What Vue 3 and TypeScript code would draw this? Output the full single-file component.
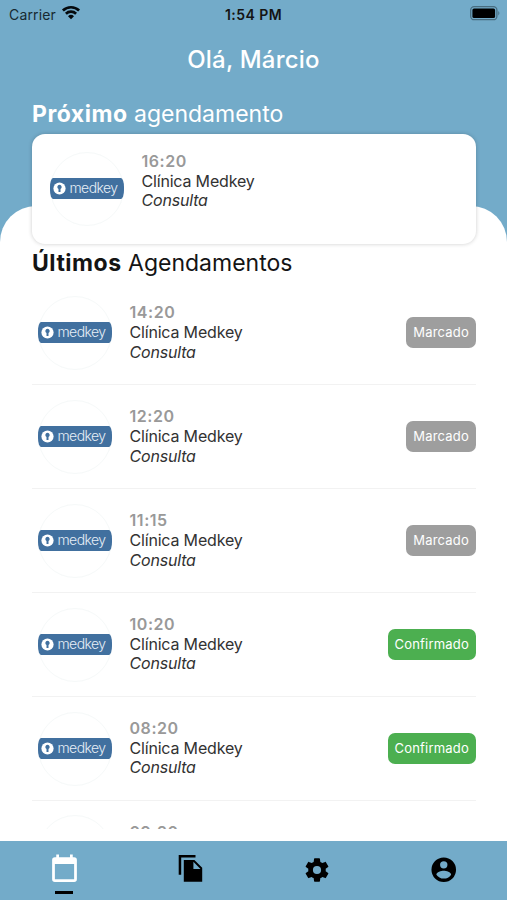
<script setup lang="ts">
import { ref } from 'vue'

interface Appointment {
  time: string
  status: 'Marcado' | 'Confirmado'
}

const appointments: Appointment[] = [
  { time: '14:20', status: 'Marcado' },
  { time: '12:20', status: 'Marcado' },
  { time: '11:15', status: 'Marcado' },
  { time: '10:20', status: 'Confirmado' },
  { time: '08:20', status: 'Confirmado' },
  { time: '09:20', status: 'Confirmado' },
]

const tabs = ['agenda', 'documents', 'settings', 'account']
const active = ref('agenda')
</script>

<template>
  <div class="screen">
    <header class="status">
      <div class="carrier">
        <span>Carrier</span>
        <svg width="20" height="15" viewBox="0 0 20 15" fill="none" stroke="#050a0d" stroke-width="2.7">
          <path d="M1.9 5.5a11.7 11.7 0 0 1 16.2 0" />
          <path d="M4.9 8.7a7.4 7.4 0 0 1 10.2 0" />
          <path d="M7 11.3a4.3 4.3 0 0 1 6 0l-3 3z" fill="#050a0d" stroke="none" />
        </svg>
      </div>
      <strong class="clock">1:54 PM</strong>
      <svg class="battery" width="31" height="15" viewBox="0 0 31 15">
        <rect x="0.7" y="0.7" width="26.2" height="13" rx="3.5" fill="none" stroke="#486d80" stroke-width="1.3" />
        <rect x="2.4" y="2.5" width="22.7" height="9.5" rx="1.6" fill="#000" />
        <path d="M28.3 5q2.2 2.2 0 4.4z" fill="#486d80" />
      </svg>
    </header>

    <h1 class="greeting">Olá, Márcio</h1>
    <h2 class="heading next"><b>Próximo</b> agendamento</h2>

    <main class="sheet">
      <section class="card">
        <div class="avatar">
          <div class="brand">
            <svg width="13" height="13" viewBox="0 0 13 13">
              <circle cx="6.5" cy="6.5" r="6.1" fill="#fff" />
              <path d="M6.5 2.8a2.3 2.3 0 0 1 1 4.3V10h-2V7.1a2.3 2.3 0 0 1 1-4.3z" fill="#41709f" />
            </svg>
            <span>medkey</span>
          </div>
        </div>
        <div class="details">
          <b>16:20</b>
          <span>Clínica Medkey</span>
          <i>Consulta</i>
        </div>
      </section>

      <h2 class="heading latest"><b>Últimos</b> Agendamentos</h2>

      <ul class="list">
        <li v-for="item in appointments" :key="item.time" class="row">
          <div class="avatar">
            <div class="brand">
              <svg width="13" height="13" viewBox="0 0 13 13">
                <circle cx="6.5" cy="6.5" r="6.1" fill="#fff" />
                <path d="M6.5 2.8a2.3 2.3 0 0 1 1 4.3V10h-2V7.1a2.3 2.3 0 0 1 1-4.3z" fill="#41709f" />
              </svg>
              <span>medkey</span>
            </div>
          </div>
          <div class="details">
            <b>{{ item.time }}</b>
            <span>Clínica Medkey</span>
            <i>Consulta</i>
          </div>
          <span class="badge" :class="{ confirmed: item.status === 'Confirmado' }">{{ item.status }}</span>
        </li>
      </ul>
    </main>

    <nav class="tabs">
      <button v-for="tab in tabs" :key="tab" class="tab" :class="{ active: active === tab }" @click="active = tab">
        <svg v-if="tab === 'agenda'" width="33" height="33" viewBox="0 0 24 24">
          <path d="M19 19H5V8h14m0-5h-1V1h-2v2H8V1H6v2H5a2 2 0 0 0-2 2v14a2 2 0 0 0 2 2h14a2 2 0 0 0 2-2V5a2 2 0 0 0-2-2z" />
        </svg>
        <svg v-else-if="tab === 'documents'" width="33" height="33" viewBox="0 0 33 33">
          <path d="M4.7 2h16.8v2.5H7.2v17.2H4.7z" />
          <path fill-rule="evenodd" d="M9.8 7h10.6l7.8 7.8v13.9H9.8zM19.4 8.8v7.1h7.1z" />
        </svg>
        <svg v-else-if="tab === 'settings'" width="28" height="28" viewBox="0 0 24 24">
          <path d="M12 15.5A3.5 3.5 0 0 1 8.5 12 3.5 3.5 0 0 1 12 8.5a3.5 3.5 0 0 1 3.5 3.5 3.5 3.5 0 0 1-3.5 3.5m7.43-2.53c.04-.32.07-.64.07-.97s-.03-.66-.07-1l2.11-1.63c.19-.15.24-.42.12-.64l-2-3.46c-.12-.22-.39-.31-.61-.22l-2.49 1c-.52-.39-1.06-.73-1.69-.98l-.37-2.65A.506.506 0 0 0 14 2h-4c-.25 0-.46.18-.5.42l-.37 2.65c-.63.25-1.17.59-1.69.98l-2.49-1c-.22-.09-.49 0-.61.22l-2 3.46c-.13.22-.07.49.12.64L4.57 11c-.04.34-.07.67-.07 1s.03.65.07.97l-2.11 1.66c-.19.15-.25.42-.12.64l2 3.46c.12.22.39.3.61.22l2.49-1.01c.52.4 1.06.74 1.69.99l.37 2.65c.04.24.25.42.5.42h4c.25 0 .46-.18.5-.42l.37-2.65c.63-.26 1.17-.59 1.69-.99l2.49 1.01c.22.08.49 0 .61-.22l2-3.46c.12-.22.07-.49-.12-.64z" />
        </svg>
        <svg v-else width="29.5" height="29.5" viewBox="0 0 24 24">
          <path d="M12 19.2c-2.5 0-4.71-1.28-6-3.2.03-2 4-3.1 6-3.1s5.97 1.1 6 3.1a7.23 7.23 0 0 1-6 3.2M12 5a3 3 0 0 1 3 3 3 3 0 0 1-3 3 3 3 0 0 1-3-3 3 3 0 0 1 3-3m0-3A10 10 0 0 0 2 12a10 10 0 0 0 10 10 10 10 0 0 0 10-10A10 10 0 0 0 12 2z" />
        </svg>
      </button>
    </nav>
  </div>
</template>

<style>
body {
  margin: 0;
}
</style>

<style scoped>
* {
  box-sizing: border-box;
}

.screen {
  width: 507px;
  height: 900px;
  overflow: hidden;
  display: flex;
  flex-direction: column;
  background: #73abc9;
  color: #141414;
  font-family: Inter, sans-serif;
}

.status {
  height: 28px;
  flex: none;
  display: grid;
  grid-template-columns: 1fr auto 1fr;
  align-items: center;
  padding: 0 6px 0 9px;
  font-size: 14px;
}

.carrier {
  display: flex;
  align-items: center;
  gap: 5px;
  color: #172931;
  letter-spacing: 0.15px;
}

.carrier svg {
  margin-top: -3px;
}

.clock {
  margin-left: -3px;
  font-size: 14px;
  font-weight: 600;
  letter-spacing: 0.45px;
}

.battery {
  justify-self: end;
  margin-top: -1px;
}

.greeting {
  flex: none;
  height: 32px;
  margin: 16px 0 0;
  line-height: 32px;
  text-align: center;
  font-size: 24px;
  font-weight: 500;
  letter-spacing: 0.2px;
  color: #fff;
}

.heading {
  flex: none;
  margin: 0;
  height: 30px;
  line-height: 30px;
  padding-left: 32px;
  font-size: 23px;
  font-weight: 400;
}

.heading b {
  font-weight: 700;
  letter-spacing: 0.5px;
}

.next {
  margin-top: 23px;
  color: #fff;
}

.sheet {
  flex: 1;
  min-height: 0;
  display: flex;
  flex-direction: column;
  margin-top: 77px;
  border-radius: 36px 36px 0 0;
  background: #fff;
}

.card {
  flex: none;
  height: 110px;
  margin: -72px 31px 0 31.5px;
  padding: 17.5px 18px;
  display: flex;
  border-radius: 13px;
  background: #fff;
  box-shadow: 0 0 4px rgba(0, 0, 0, 0.2);
}

.avatar {
  flex: none;
  width: 74px;
  height: 74px;
  display: flex;
  align-items: center;
  border: 1px solid #f6f9f9;
  border-radius: 50%;
}

.brand {
  flex: none;
  width: 74px;
  height: 21px;
  margin-left: -1px;
  padding-left: 3px;
  display: flex;
  align-items: center;
  gap: 4px;
  border-radius: 3px / 9px;
  background: #41709f;
  color: #e6eef6;
  font-size: 14px;
  font-weight: 300;
  letter-spacing: -0.6px;
  line-height: 18px;
}

.brand span {
  padding-bottom: 1px;
}

.details {
  display: flex;
  flex-direction: column;
  margin-left: 18px;
  font-size: 16px;
  line-height: 19.7px;
  letter-spacing: -0.18px;
  color: #323232;
}

.details b {
  color: #999;
  font-weight: 600;
  letter-spacing: 0.55px;
}

.card .details {
  padding-top: 0.5px;
}

.latest {
  margin-top: 4px;
}

.list {
  flex: 1;
  min-height: 0;
  margin: 3.5px 31px 12px 31.5px;
  padding: 0;
  overflow: hidden;
  list-style: none;
}

.row {
  height: 103.9px;
  display: flex;
  align-items: center;
  padding: 0 0 0 6px;
  border-bottom: 1px solid #f2f2f2;
}

.badge {
  height: 31px;
  margin-left: auto;
  padding: 0 7px;
  border-radius: 7px;
  background: #9e9e9e;
  color: #fff;
  font-size: 13px;
  letter-spacing: 0.2px;
  line-height: 31px;
}

.confirmed {
  background: #4caf50;
}

.tabs {
  flex: none;
  height: 59px;
  display: grid;
  grid-template-columns: repeat(4, 1fr);
  background: #73abc9;
}

.tab {
  position: relative;
  display: flex;
  align-items: center;
  justify-content: center;
  padding: 0 0 1.5px;
  border: 0;
  background: none;
  fill: #000;
}

.tab.active {
  padding-left: 1.5px;
  fill: #fff;
}

.tab.active::after {
  content: '';
  position: absolute;
  left: 55px;
  bottom: 6px;
  width: 18px;
  height: 3px;
  background: #000;
}
</style>
